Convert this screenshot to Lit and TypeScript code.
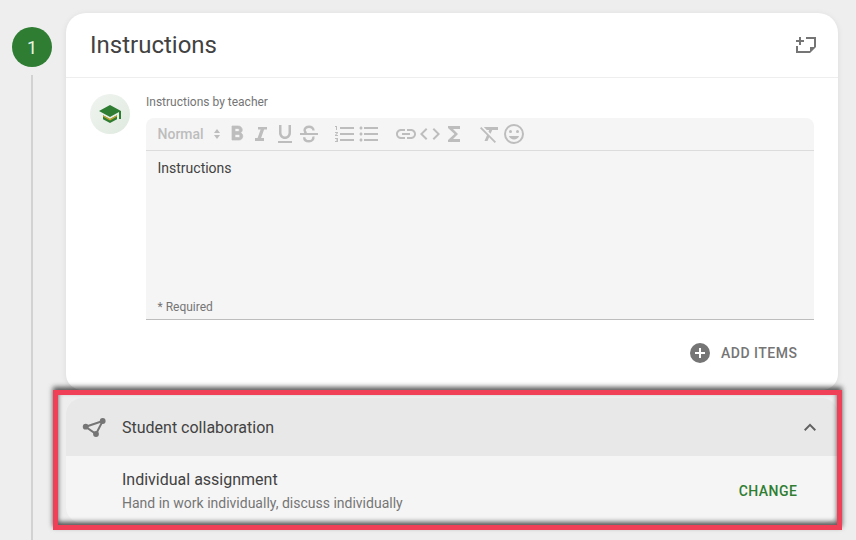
import { LitElement, html, css } from "lit";
import { customElement } from "lit/decorators.js";

@customElement("app-root")
export class AppRoot extends LitElement {
  static styles = css`
    :host { display: block; width: 856px; height: 540px; overflow: hidden; background: #eeeeee; font-family: Roboto, "Liberation Sans", sans-serif; color: #424242; }
    .page { display: flex; height: 540px; padding: 13px 18px 0 12px; box-sizing: border-box; position: relative; }
    .rail { width: 40px; margin-right: 14px; display: flex; flex-direction: column; align-items: center; padding-top: 14px; flex: none; }
    .step { width: 40px; height: 40px; border-radius: 50%; background: #2e7d32; color: #e8f5e9; font-size: 18px; display: flex; align-items: center; justify-content: center; flex: none; }
    .line { width: 2px; flex: 1; margin-top: 8px; background: #d2d2d2; }
    .main { flex: 1; min-width: 0; display: flex; flex-direction: column; }
    .card { background: #fff; border-radius: 20px 20px 16px 16px; height: 377px; box-shadow: 0 1px 6px rgba(0,0,0,.08); display: flex; flex-direction: column; }
    .head { height: 64px; border-bottom: 1px solid #eeeeee; display: flex; align-items: center; justify-content: space-between; padding: 0 20px 0 24px; flex: none; }
    .head h1 { margin: 0; font-weight: 400; font-size: 24px; color: #424242; }
    .body { display: flex; padding: 16px 24px 0 24px; gap: 16px; }
    .avatar { width: 40px; height: 40px; border-radius: 50%; background: linear-gradient(135deg, #f1f4f1, #dfeadf); display: flex; align-items: center; justify-content: center; flex: none; }
    .editor-wrap { flex: 1; min-width: 0; }
    .label { font-size: 12px; color: #757575; line-height: 16px; margin-bottom: 8px; }
    .toolbar { height: 32px; background: #f5f5f5; border-radius: 8px 8px 0 0; border-bottom: 1px solid #dcdcdc; display: flex; align-items: center; padding-left: 11.5px; color: #bdbdbd; }
    .normal { font-size: 14px; font-weight: 500; width: 55.5px; color: #bdbdbd; }
    .toolbar svg { display: block; flex: none; fill: #bdbdbd; }
    .toolbar .sort { margin-right: 4px; }
    .toolbar .group { margin-left: 12px; }
    .edit { height: 168px; background: #f5f5f5; border-bottom: 1px solid #bdbdbd; padding: 0 11.5px; display: flex; flex-direction: column; justify-content: space-between; }
    .edit .txt { font-size: 14px; line-height: 20px; padding-top: 7px; color: #424242; }
    .edit .req { font-size: 12px; line-height: 16px; color: #757575; padding-bottom: 4px; }
    .add { display: flex; justify-content: flex-end; align-items: center; gap: 11px; padding: 23px 16.5px 0 0; font-size: 14px; font-weight: 500; letter-spacing: .5px; color: #757575; }
    .panel { margin-top: 8px; border-radius: 16px; overflow: hidden; background: #f5f5f5; }
    .panel-head { height: 58px; background: #e8e8e8; display: flex; align-items: center; padding: 0 16px; font-size: 16px; color: #424242; }
    .panel-head .t { margin-left: 16px; flex: 1; }
    .panel-body { height: 67px; display: flex; align-items: center; padding: 2px 40.5px 0 56px; box-sizing: border-box; }
    .info { flex: 1; }
    .info .a { font-size: 16px; line-height: 24px; color: #424242; margin-bottom: 1px; }
    .info .b { font-size: 14px; line-height: 20px; color: #757575; }
    .change { font-size: 14px; font-weight: 500; letter-spacing: .5px; color: #2e7d32; padding-top: 1px; }
    .hl { position: absolute; left: 53px; top: 390px; width: 789px; height: 140px; box-sizing: border-box; border: 5px solid #f04057; box-shadow: 0 -3px 5px rgba(0,0,0,.65), inset 0 -3px 5px rgba(0,0,0,.65); pointer-events: none; }
  `;

  render() {
    return html`<div class="page">
      <div class="rail"><div class="step">1</div><div class="line"></div></div>
      <div class="main">
        <section class="card">
          <div class="head"><h1>Instructions</h1>
            <svg width="24" height="24" viewBox="0 0 24 24" fill="#757575"><path d="M5 4h2v3h3v2H7v3H5V9H2V7h3zM12 4h10v10h-2V6h-8zM22 14l-6 6v-6zM2 13h2v5h12v2H2z"/></svg>
          </div>
          <div class="body">
            <div class="avatar">
              <svg width="24" height="24" viewBox="0 0 24 24"><path d="M12 3 1 9l11 6 9-4.900V17h2V9z" fill="#2e7d32"/><path d="M5 13.200v4L12 21l7-3.800v-4L12 17z" fill="#2e7d32"/><path d="M5 13.200v1.400l7 3.800 7-3.800v-1.400L12 17z" fill="#c9a227"/></svg>
            </div>
            <div class="editor-wrap">
              <div class="label">Instructions by teacher</div>
              <div class="toolbar">
                <span class="normal">Normal</span>
                <svg class="sort" width="8" height="12" viewBox="0 0 8 12"><path d="M4 1 7 5H1zM1 7h6l-3 4z"/></svg>
                <svg width="24" height="24" viewBox="0 0 24 24" style="stroke:#bdbdbd;stroke-width:.7"><path d="M13.500 15.500H10v-3h3.500a1.500 1.500 0 0 1 0 3zM10 6.500h3a1.500 1.500 0 0 1 0 3h-3zM15.600 10.790C16.570 10.110 17.250 9 17.250 8c0-2.260-1.750-4-4-4H7v14h7.040c2.100 0 3.710-1.700 3.710-3.790 0-1.520-.86-2.820-2.150-3.420z" fill-rule="evenodd"/></svg>
                <svg width="24" height="24" viewBox="0 0 24 24"><path d="M9 5v2.500h2.600L8.600 16H6v3h9v-3h-2.900l3-8.500H18V5z"/></svg>
                <svg width="24" height="24" viewBox="0 0 24 24"><path d="M12 17c3.300 0 6-2.700 6-6V3h-2.500v8c0 1.900-1.600 3.500-3.500 3.500S8.500 12.900 8.500 11V3H6v8c0 3.300 2.700 6 6 6zM5 19v2h14v-2z"/></svg>
                <svg width="24" height="24" viewBox="0 0 24 24"><path d="M3 11h18v2H3z"/><path d="M16.500 8.500c0-2.300-2-3.800-4.500-3.800S7.600 6.200 7.600 8.200c0 1.300.7 2.300 1.900 2.800M16.300 14.500c.6 2.800-1.500 4.800-4.300 4.800-3 0-4.800-1.700-4.800-4" style="fill:none;stroke:#bdbdbd;stroke-width:2.400"/></svg>
                <svg class="group" width="24" height="24" viewBox="0 0 24 24"><path d="M2 17h2v.5H3v1h1v.5H2v1h3v-4H2zm1-9h1V4H2v1h1zm-1 3h1.800L2 13.100v.9h3v-1H3.200L5 10.900V10H2zm5-6v2h14V5zm0 14h14v-2H7zm0-6h14v-2H7z"/></svg>
                <svg width="24" height="24" viewBox="0 0 24 24"><path d="M4 10.500c-.8 0-1.500.7-1.500 1.500s.7 1.500 1.500 1.500 1.500-.7 1.500-1.500-.7-1.500-1.500-1.500zm0-6c-.8 0-1.500.7-1.500 1.500S3.200 7.500 4 7.500 5.500 6.800 5.500 6 4.800 4.500 4 4.500zm0 12c-.8 0-1.500.7-1.500 1.500s.7 1.500 1.500 1.500 1.500-.7 1.500-1.500-.7-1.500-1.500-1.500zM7 19h14v-2H7zm0-6h14v-2H7zm0-8v2h14V5z"/></svg>
                <svg class="group" style="margin-left:13px" width="24" height="24" viewBox="0 0 24 24"><path d="M3.900 12c0-1.700 1.400-3.100 3.100-3.100h4V7H7c-2.800 0-5 2.200-5 5s2.200 5 5 5h4v-1.900H7c-1.700 0-3.100-1.400-3.100-3.100zM8 13h8v-2H8zm9-6h-4v1.900h4c1.700 0 3.100 1.400 3.100 3.100s-1.400 3.100-3.100 3.100h-4V17h4c2.800 0 5-2.200 5-5s-2.200-5-5-5z"/></svg>
                <svg width="24" height="24" viewBox="0 0 24 24"><path d="M9.400 16.600 4.800 12l4.600-4.600L8 6l-6 6 6 6zm5.200 0 4.600-4.600-4.600-4.600L16 6l6 6-6 6z"/></svg>
                <svg width="24" height="24" viewBox="0 0 24 24"><path d="M18 4H6v2l6.500 6L6 18v2h12v-3h-7l5-5-5-5h7z"/></svg>
                <svg class="group" width="24" height="24" viewBox="0 0 24 24"><path d="M6 5v.2L8.800 8h2.400l-.7 1.700 2.100 2.100L14.200 8H20V5zM3.300 5 2 6.300l7 7L6.500 19h3l1.600-3.700 5.600 5.700 1.300-1.300z"/></svg>
                <svg width="24" height="24" viewBox="0 0 24 24"><circle cx="15.500" cy="9.500" r="1.500"/><circle cx="8.500" cy="9.500" r="1.500"/><path d="M12 2a10 10 0 1 0 0 20 10 10 0 0 0 0-20zm0 18a8 8 0 1 1 0-16 8 8 0 0 1 0 16zm0-2.500c2.300 0 4.300-1.500 5.100-3.500H6.900c.8 2 2.800 3.500 5.100 3.500z"/></svg>
              </div>
              <div class="edit"><div class="txt">Instructions</div><div class="req">* Required</div></div>
              <div class="add">
                <svg width="20" height="20" viewBox="0 0 20 20"><circle cx="10" cy="10" r="10" fill="#757575"/><path d="M9 5h2v4h4v2h-4v4H9v-4H5V9h4z" fill="#fff"/></svg>
                <span>ADD ITEMS</span>
              </div>
            </div>
          </div>
        </section>
        <section class="panel">
          <div class="panel-head">
            <svg width="24" height="24" viewBox="0 0 24 24"><path d="M3.700 11.700 20.700 6 14 19z" stroke="#757575" stroke-width="2" fill="none"/><g fill="#757575"><circle cx="3.700" cy="11.700" r="2.900"/><circle cx="20.700" cy="6" r="2.900"/><circle cx="14" cy="19" r="2.900"/></g></svg>
            <span class="t">Student collaboration</span>
            <svg width="24" height="24" viewBox="0 0 24 24" fill="#616161"><path d="m12 8.500-6 6 1.400 1.400 4.600-4.600 4.600 4.600 1.400-1.400z"/></svg>
          </div>
          <div class="panel-body">
            <div class="info"><div class="a">Individual assignment</div><div class="b">Hand in work individually, discuss individually</div></div>
            <span class="change">CHANGE</span>
          </div>
        </section>
      </div>
      <div class="hl"></div>
    </div>`;
  }
}
